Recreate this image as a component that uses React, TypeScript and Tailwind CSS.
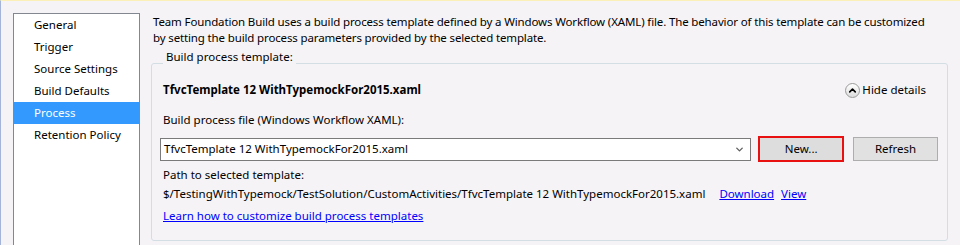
import { ChevronDown, ChevronUp } from "lucide-react";

const pages = ["General", "Trigger", "Source Settings", "Build Defaults", "Process", "Retention Policy"];

export default function App() {
  const selected = "Process";

  return (
    <div
      className="w-[960px] h-[245px] overflow-hidden flex bg-[#f6f3f6] border-t border-t-[#fbf1b8] border-l border-l-[#a3b4d8] text-[11.5px] text-black"
      style={{ fontFamily: '"Noto Sans", "Open Sans", sans-serif' }}
    >
      {/* Page list */}
      <div className="ml-[12px] mt-[12px] w-[127px] h-[260px] shrink-0 bg-white border border-[#828790]">
        {pages.map((p) => (
          <div
            key={p}
            className={`h-[22px] flex items-center pl-[20px] ${p === selected ? "bg-[#3399ff] text-white" : ""}`}
          >
            {p}
          </div>
        ))}
      </div>

      {/* Content */}
      <div className="ml-[11px] flex flex-col w-[797px]">
        <p className="pt-[13px] pl-[2px] leading-[16px] whitespace-nowrap tracking-[-0.14px]">
          Team Foundation Build uses a build process template defined by a Windows Workflow (XAML) file. The behavior of this template can be customized
          <br />
          by setting the build process parameters provided by the selected template.
        </p>

        <fieldset className="mt-[3px] border border-[#d3dde4] rounded-[3px] pl-[8px] pr-[9px] pb-[15px] min-w-0">
          <legend className="ml-[3px] px-[3px] leading-[16px] pb-[12px]">Build process template:</legend>

          <div className="mt-[3px] flex items-center justify-between h-[20px]">
            <span className="pl-[3px] font-bold">TfvcTemplate 12 WithTypemockFor2015.xaml</span>
            <button className="flex items-center gap-[2px] mr-[12px]">
              <span className="w-[15px] h-[15px] rounded-full border border-[#9a9a9a] bg-gradient-to-b from-white to-[#dcdcdc] flex items-center justify-center">
                <ChevronUp className="w-[11px] h-[11px] text-black" strokeWidth={3.5} />
              </span>
              <span>Hide details</span>
            </button>
          </div>

          <div className="mt-[12px] pl-[3px] leading-[16px]">Build process file (Windows Workflow XAML):</div>

          <div className="mt-[8px] flex items-center">
            <div className="w-[592px] h-[23px] bg-white border border-[#7a7a7a] flex items-center justify-between pl-[3px] pr-[5px]">
              <span>TfvcTemplate 12 WithTypemockFor2015.xaml</span>
              <ChevronDown className="w-[11px] h-[11px] text-[#606060]" strokeWidth={3} />
            </div>
            <button className="ml-[7px] w-[86px] h-[26px] border-2 border-[#e81010] bg-[#dddddd] flex items-center justify-center">
              New...
            </button>
            <button className="ml-[9px] w-[85px] h-[24px] border border-[#adadad] bg-[#e1e1e1] flex items-center justify-center">
              Refresh
            </button>
          </div>

          <div className="mt-[3px] pl-[3px] leading-[19px]">Path to selected template:</div>
          <div className="pl-[3px] leading-[19px] flex">
            <span>$/TestingWithTypemock/TestSolution/CustomActivities/TfvcTemplate 12 WithTypemockFor2015.xaml</span>
            <a className="ml-[14px] text-[#0000ff] underline">Download</a>
            <a className="ml-[7px] text-[#0000ff] underline">View</a>
          </div>
          <div className="mt-[3px] pl-[3px] leading-[19px]">
            <a className="text-[#0000ff] underline">Learn how to customize build process templates</a>
          </div>
        </fieldset>
      </div>
    </div>
  );
}
